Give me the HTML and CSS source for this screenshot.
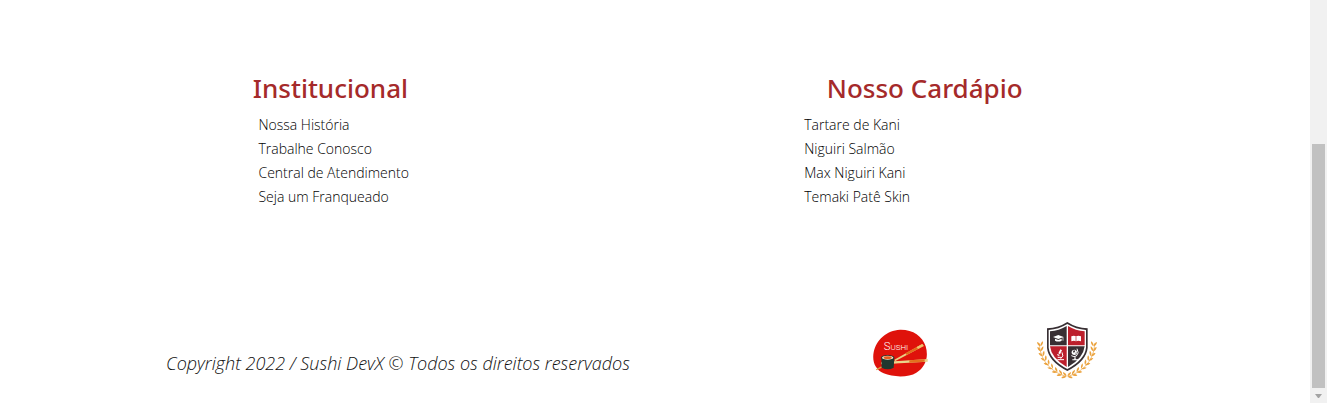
FILE: index.html
```html
<!DOCTYPE html>
<html lang="pt-BR">
<head>
<meta charset="utf-8">
<title>Sushi DevX</title>
<link rel="stylesheet" href="styles.css">
</head>
<body>
<div class="page">
  <footer class="footer">
    <div class="columns">
      <section class="column">
        <h2 class="title">Institucional</h2>
        <ul class="links">
          <li><a href="#">Nossa História</a></li>
          <li><a href="#">Trabalhe Conosco</a></li>
          <li><a href="#">Central de Atendimento</a></li>
          <li><a href="#">Seja um Franqueado</a></li>
        </ul>
      </section>
      <section class="column column-menu">
        <h2 class="title">Nosso Cardápio</h2>
        <ul class="links">
          <li><a href="#">Tartare de Kani</a></li>
          <li><a href="#">Niguiri Salmão</a></li>
          <li><a href="#">Max Niguiri Kani</a></li>
          <li><a href="#">Temaki Patê Skin</a></li>
        </ul>
      </section>
    </div>
    <div class="bottom">
      <p class="copyright">Copyright 2022 / Sushi DevX © Todos os direitos reservados</p>
      <div class="logos">
        <svg class="logo-sushi" viewBox="39 33 165 147" role="img" aria-label="Sushi">
          <path d="M120 35C158 34 187 54 197 85C207 118 196 147 169 164C146 179 99 178 71 166C45 154 36 130 41 103C48 66 80 37 120 35Z" fill="#df120b"/>
          <text class="logo-text" x="71" y="97"><tspan class="logo-initial">S</tspan>USHI</text>
          <path d="M103 125L187 78L191 84L105 130Z" fill="#e9ce84"/>
          <path d="M136 106L187 78L191 84L140 111Z" fill="#e26c1c"/>
          <path d="M170 87L187 78L191 84L174 93Z" fill="#efc56f"/>
          <path d="M48 154L64 145L66 149L49 157Z" fill="#d9a33f"/>
          <path d="M63 133L203 123L203 131L63 139Z" fill="#ead58c"/>
          <path d="M148 127L194 124L194 131L148 134Z" fill="#e2701e"/>
          <path d="M64 119L65 149Q83 159 101 149L103 119Z" fill="#20372f"/>
          <ellipse cx="83" cy="119" rx="20" ry="8" fill="#26372e"/>
          <ellipse cx="83" cy="119" rx="17" ry="6" fill="#f3dfc4"/>
          <ellipse cx="83" cy="119" rx="12" ry="4" fill="#e75b20"/>
          <path d="M102 131L125 129L125 134L102 136Z" fill="#ead58c"/>
        </svg>
        <svg class="logo-school" viewBox="33 18 186 177" role="img" aria-label="Escola">
          <defs>
            <g id="sprig">
              <path d="M0 6Q-9 3-10-7Q-1-6 0 6Z"/>
              <path d="M0 6Q9 2 8-9Q0-5 0 6Z"/>
            </g>
            <g id="branch" fill="#eba33f">
              <path d="M43 86C45 132 73 169 123 184" fill="none" stroke="#eba33f" stroke-width="2"/>
              <use href="#sprig" x="46" y="88"/>
              <use href="#sprig" x="47" y="103"/>
              <use href="#sprig" transform="translate(52 118) rotate(-15)"/>
              <use href="#sprig" transform="translate(59 132) rotate(-24)"/>
              <use href="#sprig" transform="translate(68 145) rotate(-34)"/>
              <use href="#sprig" transform="translate(79 157) rotate(-42)"/>
              <use href="#sprig" transform="translate(92 168) rotate(-50)"/>
              <use href="#sprig" transform="translate(106 176) rotate(-60)"/>
              <use href="#sprig" transform="translate(119 182) rotate(-68)"/>
            </g>
          </defs>
          <use href="#branch"/>
          <use href="#branch" transform="translate(252 0) scale(-1 1)"/>
          <path d="M127 21Q153 38 188 40V99Q184 139 127 168Q70 139 66 99V40Q101 38 127 21Z" fill="#382f33"/>
          <path d="M127 27Q153 43 183 45V98Q179 134 127 162Q75 134 71 98V45Q101 43 127 27Z" fill="#fff"/>
          <path d="M125 33V91H75V49Q102 47 125 33Z" fill="#382f33"/>
          <path d="M129 33Q152 47 179 49V91H129Z" fill="#bd1f2c"/>
          <path d="M75 94H125V156Q79 130 75 94Z" fill="#bd1f2c"/>
          <path d="M129 94H179Q175 130 129 156Z" fill="#382f33"/>
          <g fill="#fff">
            <path d="M84 66L100 60L116 66L100 72ZM90 71L100 75L110 71V77Q100 82 90 77ZM113 67H115V77H113Z"/>
            <path d="M139 64Q147 61 153 64Q160 61 168 64V79Q160 76 153 79Q147 76 139 79Z"/>
            <path d="M106 103L111 106L105 118L100 115ZM98 117L104 120L102 123L96 120Z"/>
            <circle cx="148" cy="112" r="8"/>
            <path d="M148 127H152V133H159V136H142V133H148Z"/>
          </g>
          <path d="M111 112Q118 124 107 131M98 127H108M97 134H117" fill="none" stroke="#fff" stroke-width="3"/>
          <path d="M156 101Q164 115 154 123Q147 127 139 122" fill="none" stroke="#fff" stroke-width="3"/>
          <path d="M144 107L151 106L149 112L145 113ZM152 113L155 112L152 118Z" fill="#382f33"/>
          <path d="M153 64V79" stroke="#bd1f2c" stroke-width="2"/>
        </svg>
      </div>
    </div>
  </footer>
  <div class="scrollbar" aria-hidden="true">
    <div class="thumb"></div>
    <svg class="arrow" viewBox="0 0 7 4"><path d="M0 0H7L4 4H3Z" fill="#a3a3a3"/></svg>
  </div>
</div>
</body>
</html>
```
FILE: styles.css
```css
* {
  box-sizing: border-box;
}

body {
  margin: 0;
  background: #fff;
  color: #111;
  font-family: "Segoe UI", "Open Sans", sans-serif;
  font-weight: 300;
}

.page {
  display: flex;
  min-height: 100vh;
}

.footer {
  flex: 1;
  padding-top: 70px;
}

.columns {
  display: grid;
  grid-template-columns: 1fr 1fr;
  padding: 0 5%;
}

.column {
  display: flex;
  flex-direction: column;
  padding: 0 12px;
}

.title {
  margin: 0;
  padding-left: 31%;
  color: #a52a2a;
  font-family: "Segoe UI", "Noto Sans", sans-serif;
  font-size: 26px;
  font-weight: 500;
  line-height: 36px;
}

.links {
  margin: 7px 0 0;
  padding: 0 0 0 32%;
  list-style: none;
  font-size: 14px;
  line-height: 24px;
}

.column-menu .title {
  padding-left: 28%;
}

.column-menu .links {
  padding-left: 24%;
}

.column-menu {
  padding-left: 14px;
}

.links a {
  color: #000;
  text-decoration: none;
}

.bottom {
  display: flex;
  align-items: center;
  justify-content: space-between;
  margin-top: 112px;
  padding: 0 212px 0 166px;
}

.copyright {
  margin: 24px 0 0;
  font-size: 18px;
  font-style: italic;
  line-height: 24px;
}

.logos {
  display: flex;
  align-items: center;
  gap: 108px;
}

.logo-sushi {
  width: 55px;
  height: 49px;
  margin-top: 6px;
}

.logo-school {
  width: 62px;
  height: 59px;
}

.logo-text {
  fill: #fff;
  font-family: Roboto, sans-serif;
  font-size: 24px;
}

.logo-initial {
  font-size: 34px;
}

.scrollbar {
  display: flex;
  flex-direction: column;
  align-items: center;
  justify-content: flex-end;
  width: 17px;
  background: #f1f1f1;
}

.thumb {
  width: 13px;
  height: calc(61vh - 2px);
  background: #c1c1c1;
}

.arrow {
  width: 7px;
  height: 4px;
  margin: 6px 0 5px;
}
```
